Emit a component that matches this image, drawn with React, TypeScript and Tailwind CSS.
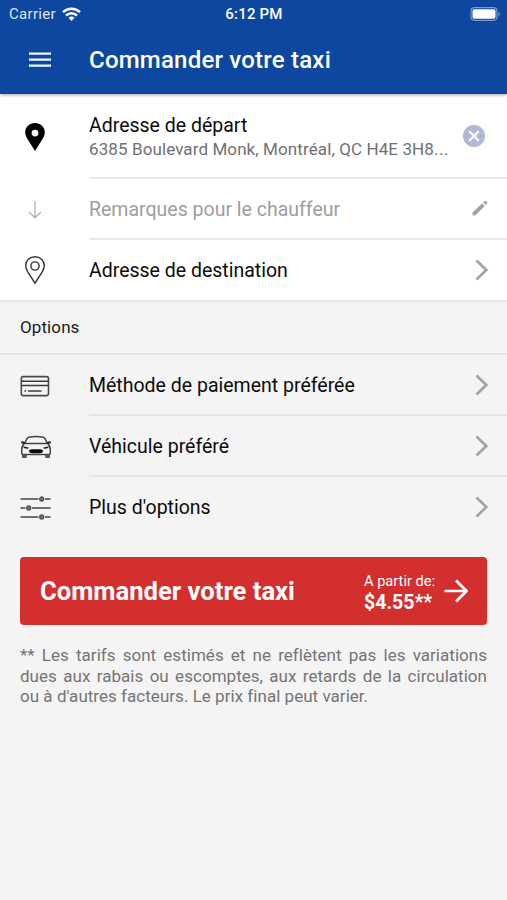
import type { ReactNode } from 'react';

function Chevron() {
  return (
    <svg className="block h-[22px] w-[14px]" viewBox="0 0 14 22" fill="none" stroke="#a3a3a3" strokeWidth="2.700">
      <path d="M1.500 1.500 11.300 11 1.500 20.500" />
    </svg>
  );
}

function Pin({ filled }: { filled?: boolean }) {
  return (
    <svg className="block h-[30px] w-[22px]" viewBox="0 0 22 30">
      {filled ? (
        <path
          fill="#000"
          fillRule="evenodd"
          d="M11 1C5.600 1 1.200 5 1.200 10.200c0 2.800 1.100 4.600 2.300 6.900L11 29l7.500-11.900c1.200-2.300 2.300-4.100 2.300-6.900C20.800 5 16.400 1 11 1Zm0 6.700a3.400 3.400 0 1 1 0 6.800 3.400 3.400 0 0 1 0-6.800Z"
        />
      ) : (
        <g fill="none" stroke="#333" strokeWidth="1.400">
          <path d="M11 1.700c-5.200 0-9.300 3.900-9.300 8.900 0 2.600 1 4.400 2.200 6.500L11 28.200l7.100-11.100c1.200-2.100 2.200-3.900 2.200-6.500 0-5-4.100-8.900-9.300-8.900Z" />
          <circle cx="11" cy="11" r="4.100" />
        </g>
      )}
    </svg>
  );
}

function DownArrow() {
  return (
    <svg className="block h-[18px] w-[14px]" viewBox="0 0 14 18" fill="none" stroke="#b0b0b0" strokeWidth="1.300">
      <path d="M7 .5v16M1 11l6 5.800L13 11" />
    </svg>
  );
}

function Card() {
  return (
    <svg className="block h-[22px] w-[30px]" viewBox="0 0 30 22" fill="none" stroke="#4a4a4a" strokeWidth="1.600">
      <rect x="1.300" y="1.600" width="27.200" height="19" rx="2" />
      <path d="M1 6.200h27.500M1 10.500h27.500M4.500 16h1.600M8 16h13.500" stroke="#3a3a3a" />
    </svg>
  );
}

function Car() {
  return (
    <svg className="block h-[24px] w-[32px]" viewBox="0 0 32 24" fill="none" stroke="#444" strokeWidth="1.500">
      <path d="M4.800 8.800C6 5 7 2.800 8.800 2.300c4-.8 10.400-.8 14.400 0C25 2.800 26 5 27.200 8.800" />
      <path d="M4.300 8.500h23.400c2 1.700 2.600 3.500 2.600 6.500v3.200c0 .8-.5 1.200-1.300 1.200H3c-.8 0-1.300-.4-1.300-1.200V15c0-3 .6-4.800 2.600-6.500Z" />
      <path d="M4.800 8.300 1.300 7M27.200 8.300 30.700 7" stroke="#222" strokeWidth="2.200" />
      <path d="M2 19.300h4.800v2.600q0 1-1 1H3q-1 0-1-1ZM25.200 19.300H30v2.600q0 1-1 1h-2.800q-1 0-1-1Z" fill="#555" stroke="none" />
      <path d="M2.800 11.200 8.300 12.200q.8 1-.5 1.500-4 .2-5-2.500ZM29.200 11.200 23.700 12.200q-.8 1 .5 1.500 4 .2 5-2.500Z" fill="#222" stroke="none" />
      <path d="M8.800 15.800q1-1.400 2.700-1.500h9q1.700.1 2.700 1.500-.5 2.300-2.700 2.500h-9q-2.200-.2-2.700-2.500Z" fill="#0a0a0a" stroke="none" />
    </svg>
  );
}

function Sliders() {
  return (
    <svg className="block h-[24px] w-[31px]" viewBox="0 0 31 24" stroke="#707070" strokeWidth="1.800">
      <path d="M.5 3h18M25 3h5.500M.5 12h5M12 12h18.500M.5 21h18M25 21h5.500" />
      <g fill="#777" stroke="#555" strokeWidth="1.300">
        <circle cx="21.700" cy="3" r="2" />
        <circle cx="8.700" cy="12" r="2" />
        <circle cx="21.700" cy="21" r="2" />
      </g>
    </svg>
  );
}

function Row({ icon, label, last }: { icon: ReactNode; label: string; last?: boolean }) {
  return (
    <div className="flex h-[61px] items-stretch">
      <div className="flex w-[89px] shrink-0 items-center pl-5">{icon}</div>
      <div
        className={`flex flex-1 items-center justify-between border-b-2 pr-[18px] ${last ? 'border-transparent' : 'border-[#e5e5e5]'}`}
      >
        <span className="whitespace-nowrap pt-[2px] text-[19.500px] text-[#0c0c0c]">{label}</span>
        <Chevron />
      </div>
    </div>
  );
}

export default function App() {
  return (
    <div className="flex h-[900px] w-[507px] flex-col overflow-hidden bg-[#f4f4f4] font-[Roboto,sans-serif]">
      <header className="z-10 h-[94px] shrink-0 bg-[#0d479f] text-white shadow-[0_1px_3px_rgba(0,0,0,0.35)]">
        <div className="grid h-[27px] grid-cols-3 items-center pl-[9px] pr-[6px]">
          <div className="flex items-center gap-[6px] text-[#dce6f7]">
            <span className="pt-px text-[15px] tracking-[0.300px]">Carrier</span>
            <svg className="h-[14px] w-[19px]" viewBox="0 0 19 14" fill="none" stroke="#fff" strokeWidth="2.500">
              <path d="M1 5.200c4.800-4.600 12.200-4.600 17 0M4 8.500c3.200-3 7.800-3 11 0" />
              <path d="M6.500 10.800q3-2.400 6 0L9.500 14Z" fill="#fff" stroke="none" />
            </svg>
          </div>
          <span className="-ml-[2px] pt-px text-center text-[15px] font-medium tracking-[0.200px]">6:12 PM</span>
          <svg className="h-[14px] w-[31px] justify-self-end" viewBox="0 0 31 14">
            <rect x="1" y=".7" width="26" height="12.600" rx="3.500" fill="none" stroke="#7b9bd0" strokeWidth="1.200" />
            <rect x="2.500" y="2.300" width="23" height="9.400" rx="1.800" fill="#fff" />
            <path d="M28.500 4.700q3 2.300 0 4.600Z" fill="#7b9bd0" />
          </svg>
        </div>
        <div className="flex h-[66px] items-center pl-[29px]">
          <svg className="h-[16px] w-[22px]" viewBox="0 0 22 16" stroke="#f2f7ff" strokeWidth="2.300">
            <path d="M0 1.700h22M0 7.700h22M0 13.700h22" />
          </svg>
          <h1 className="ml-[38px] text-[24px] font-medium tracking-[0.210px]">Commander votre taxi</h1>
        </div>
      </header>

      <section className="shrink-0 border-b-2 border-[#e5e5e5] bg-white">
        <div className="flex h-[85px]">
          <div className="flex w-[89px] shrink-0 items-center pl-6">
            <Pin filled />
          </div>
          <div className="flex flex-1 items-center justify-between border-b-2 border-[#e8e8e8] pr-[22px]">
            <div className="pt-[3px]">
              <div className="text-[19.500px] leading-[25px] text-[#0c0c0c]">Adresse de départ</div>
              <div className="whitespace-nowrap text-[17px] leading-[23px] tracking-[0.100px] text-[#707070]">
                6385 Boulevard Monk, Montréal, QC H4E 3H8<span className="tracking-[0.500px]">...</span>
              </div>
            </div>
            <svg className="h-[22px] w-[22px] shrink-0" viewBox="0 0 22 22">
              <circle cx="11" cy="11" r="11" fill="#b0b7d7" />
              <path d="m6.300 6.300 9.400 9.400m0-9.400-9.400 9.400" stroke="#fff" strokeWidth="2.300" />
            </svg>
          </div>
        </div>
        <div className="flex h-[61px]">
          <div className="flex w-[89px] shrink-0 items-center pl-7">
            <DownArrow />
          </div>
          <div className="flex flex-1 items-center justify-between border-b-2 border-[#e8e8e8] pr-[19px]">
            <span className="pt-[2px] text-[19.500px] text-[#9e9e9e]">Remarques pour le chauffeur</span>
            <svg className="mb-[2px] h-[16px] w-[16px]" viewBox="0 0 16 16" fill="#a3a3a3">
              <path d="M.5 12.600 10.200 3.300l2.600 2.600L3.200 15.400H.5ZM11.200 2.400l1.500-1.500q.6-.5 1.200 0l1.300 1.300q.5.600 0 1.200L13.800 5Z" />
            </svg>
          </div>
        </div>
        <div className="flex h-[60px] items-center">
          <div className="flex w-[89px] shrink-0 pl-6">
            <Pin />
          </div>
          <div className="flex flex-1 items-center justify-between pr-[18px]">
            <span className="pt-[2px] text-[19.500px] text-[#0c0c0c]">Adresse de destination</span>
            <Chevron />
          </div>
        </div>
      </section>

      <div className="flex h-[53px] shrink-0 items-center border-b-2 border-[#e5e5e5] pl-5 text-[17px] tracking-[0.100px] text-[#1a1a1a]">
        Options
      </div>

      <section className="shrink-0">
        <Row icon={<Card />} label="Méthode de paiement préférée" />
        <Row icon={<Car />} label="Véhicule préféré" />
        <Row icon={<Sliders />} label="Plus d'options" last />
      </section>

      <button className="mx-5 mt-[19px] flex h-[68px] shrink-0 items-center rounded-[4px] bg-[#d32f2f] pl-5 pr-[19px] text-white">
        <span className="whitespace-nowrap text-[25.600px] font-bold">Commander votre taxi</span>
        <span className="ml-auto whitespace-nowrap pt-[3px] text-left">
          <span className="block text-[14.600px] leading-[20px]">A partir de:</span>
          <span className="block text-[19.500px] font-bold leading-[23px]">$4.55**</span>
        </span>
        <svg className="ml-[9px] h-[24px] w-[24px]" viewBox="0 0 24 24" fill="none" stroke="#fff" strokeWidth="2.700">
          <path d="M.5 12h22M12 1.500 22.500 12 12 22.500" />
        </svg>
      </button>

      <p className="mx-5 mt-5 text-justify text-[17px] leading-[20.600px] tracking-[0.030px] text-[#757575]">
        ** Les tarifs sont estimés et ne reflètent pas les variations dues aux rabais ou escomptes, aux retards de la
        circulation ou à d'autres facteurs. Le prix final peut varier.
      </p>
    </div>
  );
}
